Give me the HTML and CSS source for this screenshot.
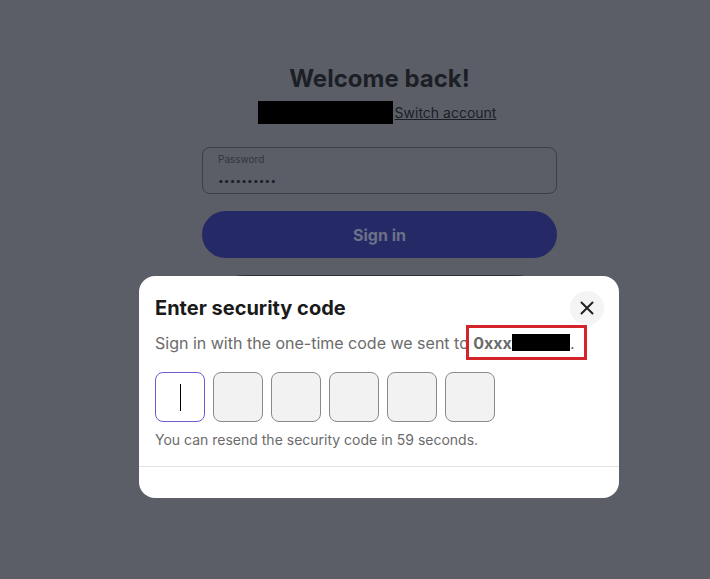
FILE: index.html
```html
<!DOCTYPE html>
<html lang="en">
<head>
<meta charset="UTF-8">
<meta name="viewport" content="width=device-width, initial-scale=1.0">
<link rel="stylesheet" href="styles.css">
<title>Sign in</title>
</head>
<body>

<div class="page">
    <div class="signin">
        <h1>Welcome back!</h1>
        <div class="account">
            <span class="redacted account-name"></span>
            <a href="#" class="switch">Switch account</a>
        </div>
        <div class="field">
            <label>Password</label>
            <div class="dots">••••••••••</div>
        </div>
        <button type="button" class="btn-primary">Sign in</button>
        <button type="button" class="btn-secondary"></button>
    </div>
</div>

<div class="modal">
    <div class="modal-head">
        <h2>Enter security code</h2>
        <button type="button" class="close" aria-label="Close">
            <svg width="14" height="14" viewBox="0 0 14 14">
                <path d="M1.5 1.5 L12.5 12.5 M12.5 1.5 L1.5 12.5" stroke="#222" stroke-width="2" stroke-linecap="round"/>
            </svg>
        </button>
    </div>
    <p class="hint">Sign in with the one-time code we sent to <span class="target"><b>0xxx</b><span class="redacted mask"></span>.</span></p>
    <div class="code">
        <div class="digit active"><span class="caret"></span></div>
        <div class="digit"></div>
        <div class="digit"></div>
        <div class="digit"></div>
        <div class="digit"></div>
        <div class="digit"></div>
    </div>
    <p class="resend">You can resend the security code in 59 seconds.</p>
    <div class="modal-foot"></div>
</div>

</body>
</html>
```

FILE: styles.css
```css
body {
    margin: 0;
    height: 579px;
    overflow: hidden;
    background-color: #5b5e66; /* dimmed page */
    font-family: Inter, "Noto Sans", sans-serif;
    color: #1c1f25;
}

.page {
    display: flex;
    justify-content: center;
    padding-top: 63px;
    padding-left: 49px;
}

.signin {
    width: 355px;
    display: flex;
    flex-direction: column;
    align-items: center;
}

h1 {
    margin: 0;
    font-size: 24px;
    font-weight: 700;
    line-height: 31px;
    color: #1c1f25;
}

.account {
    display: flex;
    align-items: center;
    margin-top: 7px;
    padding-right: 5px;
    height: 23px;
}

.redacted {
    display: inline-block;
    background-color: #000;
}

.account-name {
    width: 135px;
    height: 23px;
    margin-right: 2px;
}

.switch {
    font-size: 14px;
    color: #1c1f25;
    text-decoration: underline;
}

.field {
    align-self: stretch;
    margin-top: 23px;
    border: 1px solid #3b3e45;
    border-radius: 8px;
    padding: 5px 15px 0;
    box-sizing: border-box;
    height: 47px;
}

.field label {
    display: block;
    font-size: 10px;
    line-height: 12px;
    color: #32353c;
}

.dots {
    font-size: 10px;
    letter-spacing: 0.2px;
    line-height: 14px;
    margin-top: 8px;
    color: #1c1f25;
}

.btn-primary {
    align-self: stretch;
    margin-top: 17px;
    height: 47px;
    border: none;
    border-radius: 24px;
    background-color: #252a66;
    color: #6c7188;
    font-family: inherit;
    font-size: 16px;
    font-weight: 700;
}

.btn-secondary {
    width: 322px;
    margin-top: 17px;
    height: 47px;
    border: 1px solid #2e3037;
    border-radius: 24px;
    background: none;
}

.modal {
    position: absolute;
    left: 139px;
    top: 276px;
    width: 480px;
    height: 222px;
    background-color: #fff;
    border-radius: 16px;
    box-sizing: border-box;
    padding: 15px 16px 0;
    display: flex;
    flex-direction: column;
}

.modal-head {
    display: flex;
    align-items: center;
    justify-content: space-between;
    height: 34px;
}

.modal-head h2 {
    margin: 0;
    font-size: 20px;
    font-weight: 700;
    color: #1a1a1a;
}

.close {
    width: 34px;
    height: 34px;
    margin-right: -1px;
    border: none;
    border-radius: 50%;
    background-color: #f4f4f4;
    display: flex;
    align-items: center;
    justify-content: center;
    padding: 0;
}

.hint {
    margin: 8px 0 0;
    font-size: 16px;
    line-height: 20px;
    color: #6b6b6b;
}

.hint b {
    color: #6b6b6b;
}

.target {
    position: relative;
}

/* red annotation box drawn over the address */
.target::after {
    content: "";
    position: absolute;
    left: -7px;
    right: -13px;
    top: -8px;
    bottom: -7px;
    border: 3px solid #d3242b;
}

.mask {
    width: 58px;
    height: 17px;
    vertical-align: -2px;
}

.code {
    display: flex;
    gap: 8px;
    margin-top: 19px;
}

.digit {
    width: 50px;
    height: 50px;
    box-sizing: border-box;
    border: 1px solid #8a8a8a;
    border-radius: 8px;
    background-color: #f2f2f2;
    display: flex;
    align-items: center;
    justify-content: center;
}

.digit.active {
    border-color: #6a5ccf;
    background-color: #fff;
}

.caret {
    width: 1px;
    height: 27px;
    background-color: #000;
}

.resend {
    margin: 9px 0 0;
    font-size: 14px;
    line-height: 18px;
    color: #6b6b6b;
}

.modal-foot {
    margin: 17px -16px 0;
    border-top: 1px solid #e3e3e3;
}
```
